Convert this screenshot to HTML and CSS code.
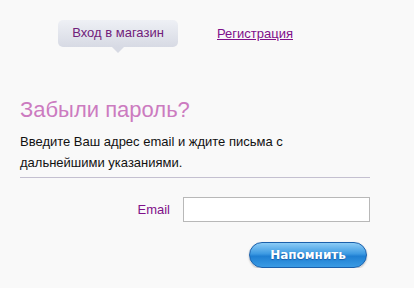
FILE: index.html
```html
<!DOCTYPE html>
<html lang="ru">
  <head>
    <meta charset="UTF-8" />
    <title>Забыли пароль?</title>
    <link rel="stylesheet" href="styles.css">
  </head>
  <body>
    <div class="page">
      <div class="tabs">
        <span class="tab active">Вход в магазин</span>
        <a class="tab-link" href="#">Регистрация</a>
      </div>

      <h1 class="title">Забыли пароль?</h1>
      <p class="lead">
        Введите Ваш адрес email и ждите письма с<br />
        дальнейшими указаниями.
      </p>
      <hr class="divider" />

      <form class="form">
        <div class="row">
          <label class="label" for="email">Email</label>
          <input class="input" id="email" type="text" />
        </div>
        <div class="actions">
          <button class="btn" type="button">Напомнить</button>
        </div>
      </form>
    </div>
  </body>
</html>
```

FILE: styles.css
```css
body {
  margin: 0;
  background: #f9f9f9;
  font-family: Arial, "Liberation Sans", sans-serif;
  color: #111;
}

.page {
  padding: 20px 44px 0 20px;
}

.tabs {
  display: flex;
  align-items: center;
  gap: 39px;
  padding-left: 38px;
}

.tab {
  position: relative;
  display: inline-block;
  width: 120px;
  height: 27px;
  line-height: 26px;
  text-align: center;
  font-size: 13px;
  color: #70207a;
  border-radius: 5px;
  background: linear-gradient(#eef0f5, #d7dae4);
}

.tab.active::after {
  content: "";
  position: absolute;
  left: 54px;
  top: 27px;
  border-left: 6px solid transparent;
  border-right: 6px solid transparent;
  border-top: 6px solid #d7dae4;
}

.tab-link {
  font-size: 13px;
  color: #80108a;
  text-decoration: underline;
}

.title {
  margin: 50px 0 0;
  font-size: 22px;
  font-weight: normal;
  color: #cc7bc0;
  line-height: 26px;
}

.lead {
  margin: 8px 0 0;
  font-size: 13px;
  line-height: 21px;
}

.divider {
  margin: 4px 0 0;
  width: 350px;
  border: none;
  border-top: 1px solid #c4c0d0;
}

.form {
  width: 350px;
}

.row {
  display: flex;
  justify-content: flex-end;
  align-items: center;
  gap: 13px;
  margin-top: 19px;
}

.label {
  font-size: 13px;
  color: #80108a;
}

.input {
  width: 183px;
  height: 21px;
  padding: 1px;
  border: 1px solid #b8b8b8;
  background: #fff;
  box-sizing: content-box;
}

.actions {
  display: flex;
  justify-content: flex-end;
  margin-top: 20px;
}

.btn {
  width: 118px;
  height: 26px;
  margin-right: 3px;
  border: 1px solid #1b60ab;
  border-radius: 13px;
  background: linear-gradient(#8cccf6 0%, #3d9ae2 45%, #1f7fd2 55%, #3a9be4 100%);
  box-shadow: 0 1px 2px rgba(0, 0, 0, 0.25);
  color: #fff;
  font-family: "DejaVu Sans", Verdana, sans-serif;
  font-size: 12px;
  font-weight: bold;
  text-shadow: 0 1px 1px #1a5ea8;
  cursor: pointer;
}
```
